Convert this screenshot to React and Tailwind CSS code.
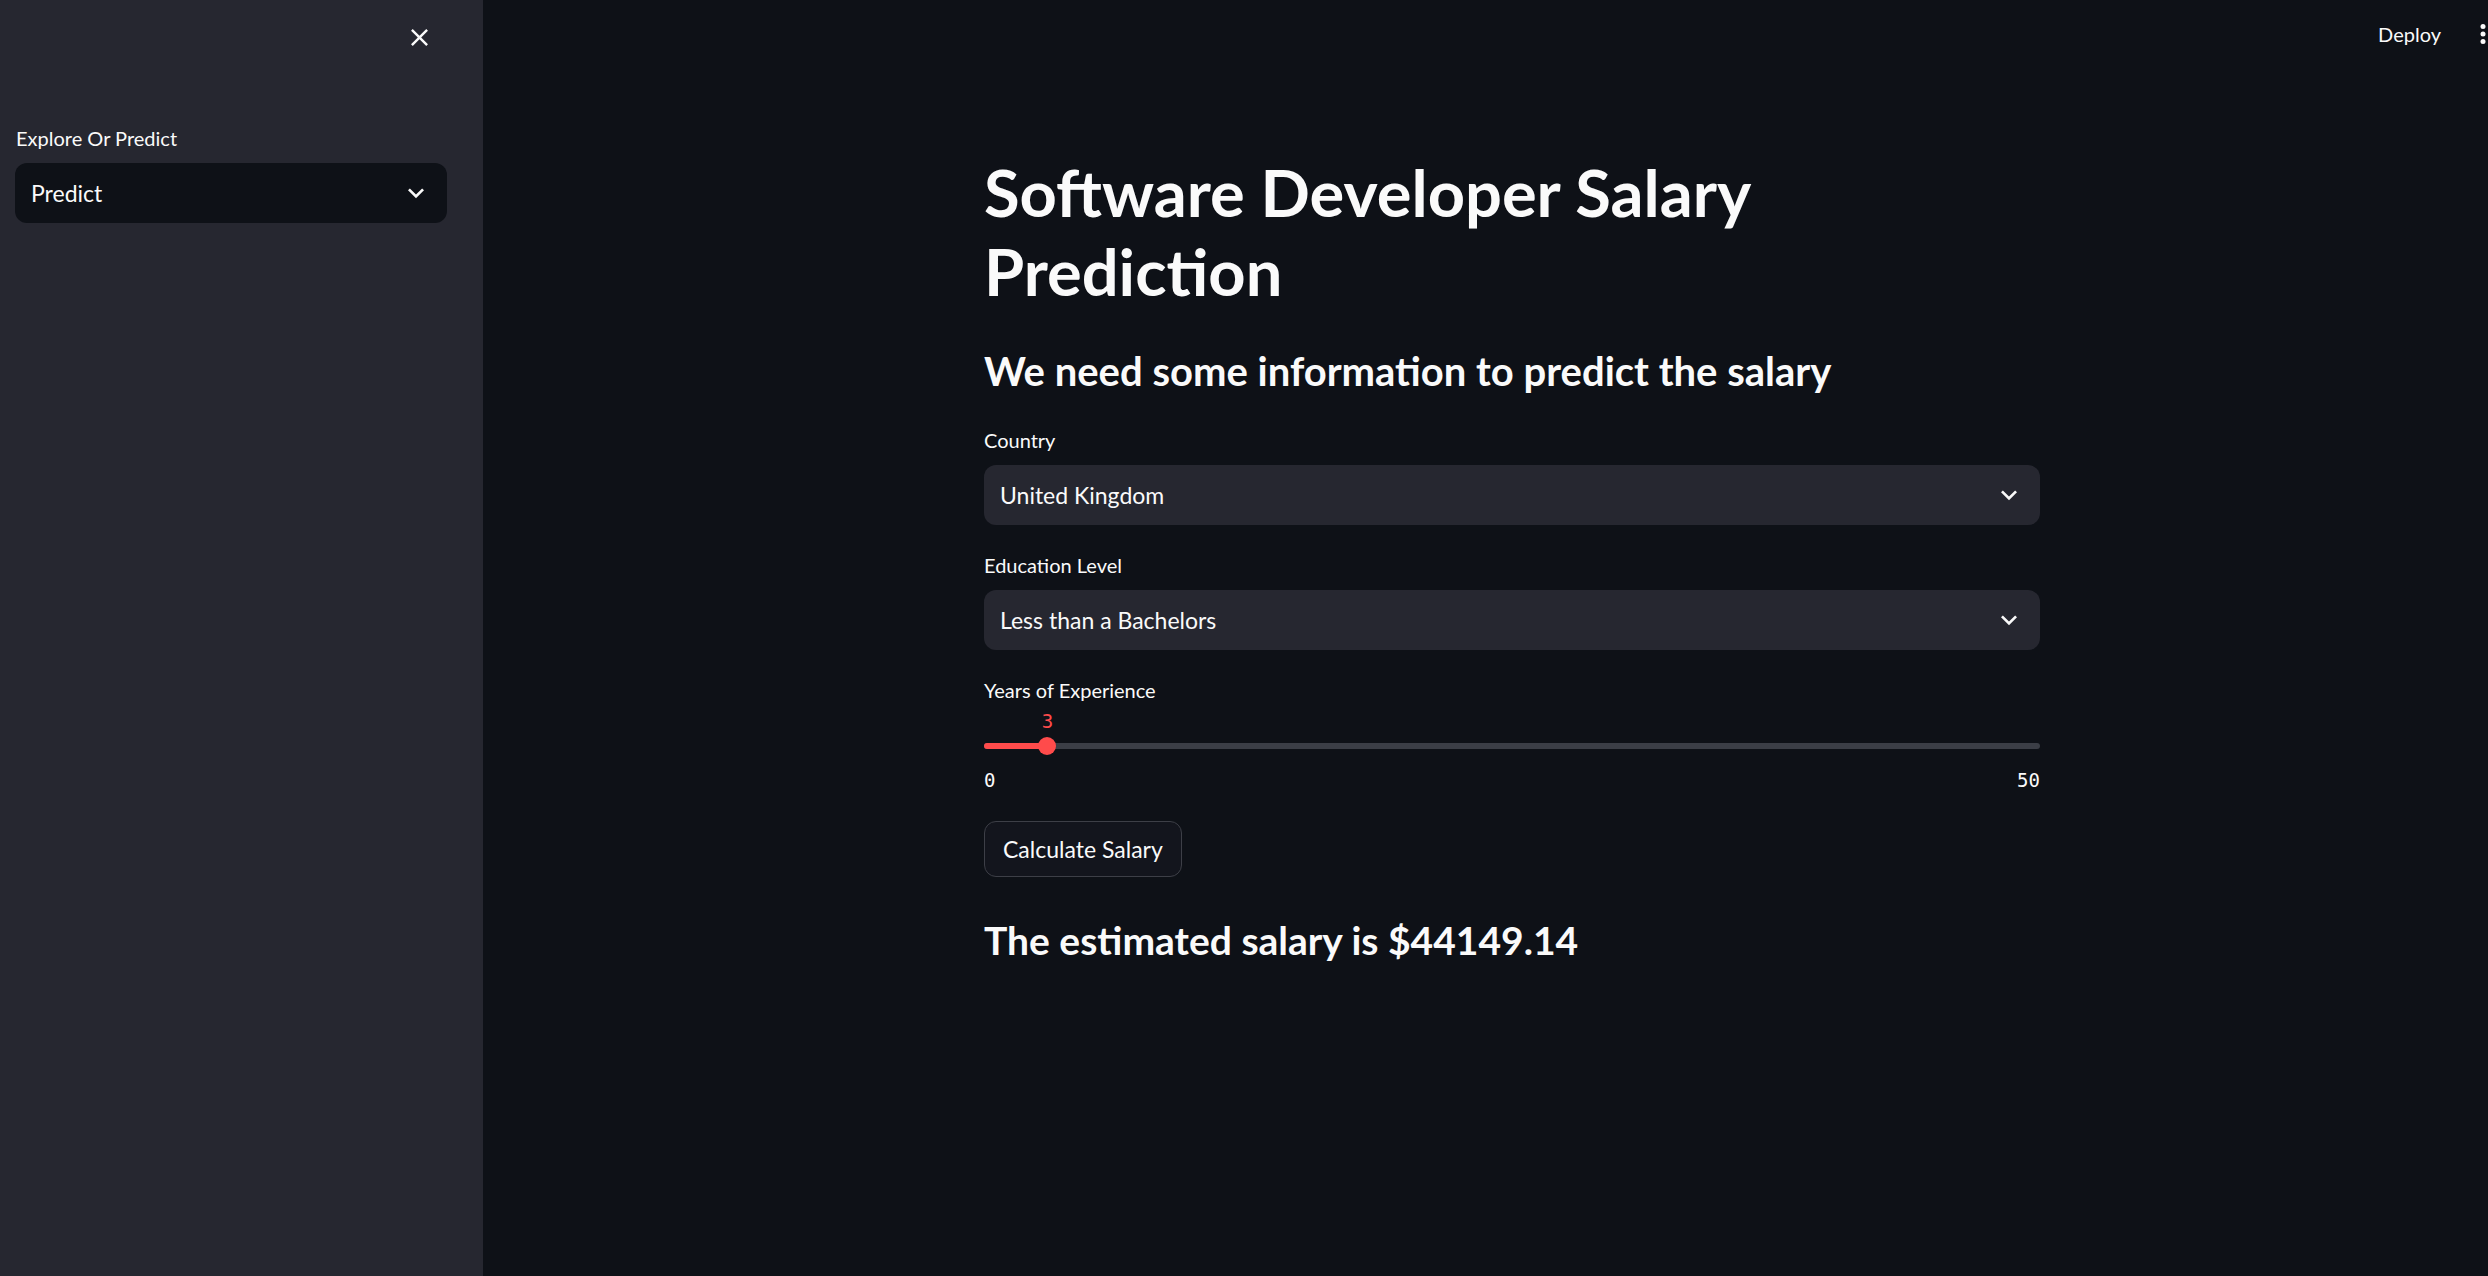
import React from 'react'

function Chevron({ className }) {
  return (
    <svg viewBox="0 0 24 24" className={className} fill="currentColor">
      <path d="M16.59 8.59L12 13.17 7.41 8.59 6 10l6 6 6-6z" />
    </svg>
  )
}

function SelectBox({ value, dark }) {
  return (
    <div className={`h-[60px] rounded-[12px] flex items-center justify-between pl-[16px] pr-[15px] ${dark ? 'bg-[#0e1117]' : 'bg-[#262730]'}`}>
      <span className="text-[23px] text-[#fafafa]">{value}</span>
      <Chevron className="w-[32px] h-[32px] text-[#fafafa]" />
    </div>
  )
}

function Sidebar() {
  return (
    <div className="w-[483px] shrink-0 bg-[#262730] h-full pl-[15px] pr-[36px]">
      {/* close button */}
      <div className="h-[74px] flex items-center justify-end pr-[13px]">
        <svg viewBox="0 0 24 24" className="w-[29px] h-[29px] text-[#fafafa]" fill="currentColor">
          <path d="M19 6.41L17.59 5 12 10.59 6.41 5 5 6.41 10.59 12 5 17.59 6.41 19 12 13.41 17.59 19 19 17.59 13.41 12z" />
        </svg>
      </div>
      <div className="mt-[49px] h-[30px] leading-[30px] text-[20px] text-[#fafafa] pl-[1px]">Explore Or Predict</div>
      <div className="mt-[10px]">
        <SelectBox value="Predict" dark />
      </div>
    </div>
  )
}

function Field({ label, children }) {
  return (
    <div>
      <div className="h-[30px] leading-[30px] text-[20px] text-[#fafafa]">{label}</div>
      <div className="mt-[10px]">{children}</div>
    </div>
  )
}

function Slider({ value, min, max }) {
  const pct = ((value - min) / (max - min)) * 100
  return (
    <div className="pt-[6px]">
      <div className="relative h-[26px]">
        <span
          className="absolute top-[0px] -translate-x-1/2 text-[19px] leading-[20px] text-[#ff4b4b]"
          style={{ left: pct + '%', fontFamily: '"DejaVu Sans Mono", monospace' }}
        >
          {value}
        </span>
      </div>
      <div className="relative h-[18px] flex items-center">
        <div className="w-full h-[6px] rounded-full bg-[#3b3e46]" />
        <div className="absolute left-0 h-[6px] rounded-full bg-[#ff4b4b]" style={{ width: pct + '%' }} />
        <div
          className="absolute w-[18px] h-[18px] rounded-full bg-[#ff4b4b] -translate-x-1/2"
          style={{ left: pct + '%' }}
        />
      </div>
      <div
        className="mt-[15px] flex justify-between text-[19px] leading-[20px] text-[#fafafa]"
        style={{ fontFamily: '"DejaVu Sans Mono", monospace' }}
      >
        <span>{min}</span>
        <span>{max}</span>
      </div>
    </div>
  )
}

export default function App() {
  return (
    <div className="w-[2488px] h-[1276px] flex overflow-hidden bg-[#0e1117] font-['Lato',sans-serif]">
      <Sidebar />

      <div className="flex-1 flex flex-col">
        {/* top bar */}
        <div className="h-[68px] flex items-center justify-end">
          <span className="text-[20px] text-[#fafafa]">Deploy</span>
          <svg viewBox="0 0 24 24" className="w-[30px] h-[30px] ml-[27px] -mr-[10px] text-[#fafafa]" fill="currentColor">
            <circle cx="12" cy="6" r="2" />
            <circle cx="12" cy="12" r="2" />
            <circle cx="12" cy="18" r="2" />
          </svg>
        </div>

        <div className="ml-[501px] w-[1056px] mt-[85px]">
          <h1 className="text-[65px] leading-[79px] font-bold text-[#fafafa]">
            Software Developer Salary
            <br />
            Prediction
          </h1>
          <h3 className="mt-[37px] text-[40px] leading-[46px] font-bold text-[#fafafa]">
            We need some information to predict the salary
          </h3>

          <div className="mt-[31px] flex flex-col gap-[25px]">
            <Field label="Country">
              <SelectBox value="United Kingdom" />
            </Field>
            <Field label="Education Level">
              <SelectBox value="Less than a Bachelors" />
            </Field>
            <div>
              <div className="h-[30px] leading-[30px] text-[20px] text-[#fafafa]">Years of Experience</div>
              <Slider value={3} min={0} max={50} />
            </div>
          </div>

          <button className="mt-[31px] h-[56px] px-[18px] rounded-[12px] border border-[#3d3f47] bg-[#13151d] text-[23px] text-[#fafafa]">
            Calculate Salary
          </button>

          <h3 className="mt-[40px] text-[39px] leading-[46px] font-bold text-[#fafafa]">
            The estimated salary is $44149.14
          </h3>
        </div>
      </div>
    </div>
  )
}
